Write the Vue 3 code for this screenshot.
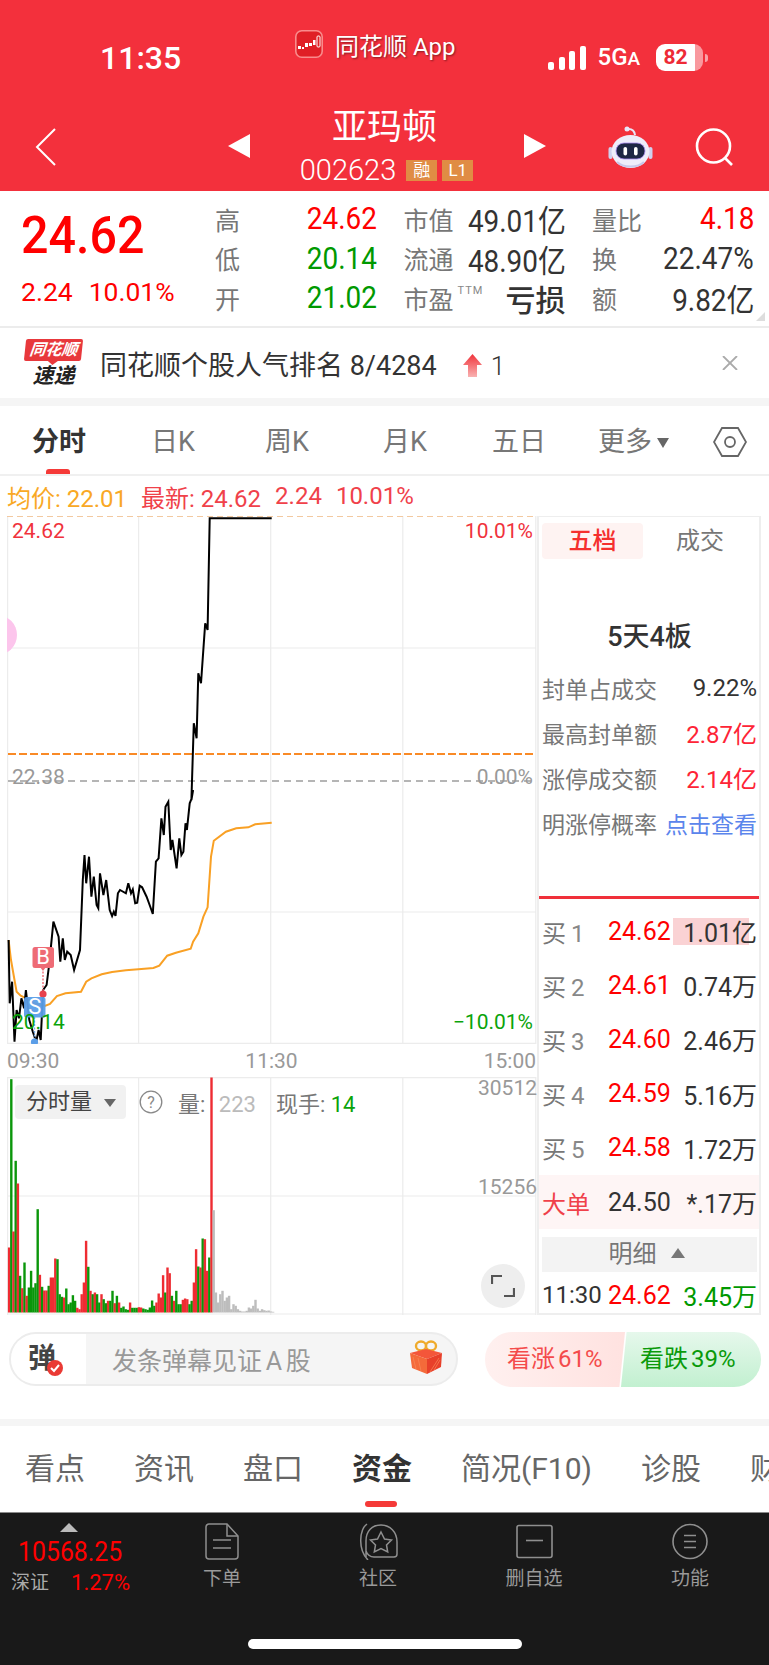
<script setup>
const stats = [
  { label: '高', value: '24.62', cls: 'up' },
  { label: '市值', value: '49.01亿' },
  { label: '量比', value: '4.18', cls: 'up' },
  { label: '低', value: '20.14', cls: 'down' },
  { label: '流通', value: '48.90亿' },
  { label: '换', value: '22.47%' },
  { label: '开', value: '21.02', cls: 'down' },
  { label: '市盈', value: '亏损', ttm: true, cls: 'loss' },
  { label: '额', value: '9.82亿' },
]
const chartTabs = ['分时', '日K', '周K', '月K', '五日']
const infoRows = [
  { label: '封单占成交', value: '9.22%', cls: 'dark' },
  { label: '最高封单额', value: '2.87亿', cls: 'red' },
  { label: '涨停成交额', value: '2.14亿', cls: 'red' },
  { label: '明涨停概率', value: '点击查看', cls: 'blue' },
]
const buys = [
  { n: 1, price: '24.62', vol: '1.01亿', hl: true },
  { n: 2, price: '24.61', vol: '0.74万' },
  { n: 3, price: '24.60', vol: '2.46万' },
  { n: 4, price: '24.59', vol: '5.16万' },
  { n: 5, price: '24.58', vol: '1.72万' },
]
const pageTabs = ['看点', '资讯', '盘口', '资金', '简况(F10)', '诊股', '财务']

// coordinates read off the reference crops
const toPts = (raw, yBase) =>
  raw.map(([x, y]) => `${(x / 2.9).toFixed(1)},${(yBase + y / 3).toFixed(1)}`).join(' ')

const priceLower = [[25,450],[28,640],[35,575],[42,755],[48,660],[55,685],[62,625],[70,655],[75,600],[85,690],[95,725],[105,755],[112,720],[118,750],[125,600],[135,585],[143,520],[155,395],[170,440],[175,515],[182,445],[188,510],[195,485],[205,495],[215,540],[232,480],[240,270],[245,195],[250,280],[258,200],[265,320],[272,260],[280,345],[285,355],[290,250],[300,315],[308,270],[318,360],[325,378],[330,365],[335,378],[342,310],[348,300],[365,310],[372,280],[380,310],[385,298],[392,340],[398,338],[405,287],[412,292],[425,320],[435,348],[443,372],[452,215],[460,205],[468,85],[475,135],[480,50],[488,35],[495,180],[500,150],[512,235],[520,145],[526,195],[532,185],[538,100],[542,120],[550,40],[556,25],[560,0]]
const priceUpper = [[555,870],[562,640],[570,685],[575,490],[583,520],[595,340],[602,360],[608,25],[788,25]]
const pricePts = toPts(priceLower, 790) + ' ' + toPts(priceUpper, 510)
const avgPts = toPts([[25,450],[32,510],[42,570],[48,605],[60,617],[70,622],[100,640],[130,648],[145,642],[165,618],[190,610],[235,605],[250,575],[265,565],[295,553],[325,546],[365,541],[410,537],[445,534],[462,527],[485,497],[510,488],[553,476],[560,455],[575,430],[590,380],[602,352],[612,200],[620,152],[655,125],[685,115],[720,112],[740,103],[788,98]], 790)

const volRaw = 'r195 g700 r243 g455 r387 g110 r73 g150 r50 g75 g125 g75 g88 g310 r113 g77 r66 r66 g80 r105 r105 r162 g160 g55 g47 r45 g72 g25 g30 g52 g35 r14 r10 r55 r90 r215 g137 r65 g55 r60 g55 g30 r55 g40 g28 r35 g35 g65 r28 g50 r30 g14 g18 g10 g8 r30 g14 g14 g14 r16 r15 g12 g10 g8 g15 g36 g20 r30 r57 r45 r112 g60 r135 r118 g50 r35 g65 g25 g25 r38 r42 r40 g25 g35 r90 r190 g138 r135 g222 r220 r125 g165 r705 h307 h60 h30 h55 h65 h35 h45 h50 h10 h25 h20 h10 h5 h3 h3 h5 h15 h12 h20 h38 h12 h5 h10 h7 h5 h6 h3 h2'
const volColors = { r: '#ee2c32', g: '#0a960a', h: '#bdbdbd' }
const volBars = volRaw.split(' ').map((s, i) => {
  const h = Number(s.slice(1)) / 3
  return { x: (7.9 + 2.2 * i).toFixed(1), y: (1312.5 - h).toFixed(1), h: h.toFixed(1), fill: volColors[s[0]] }
})
</script>

<template>
  <div class="page">
    <header class="head">
      <div class="status">
        <div class="time">11:35</div>
        <div class="app-label">
          <svg width="28" height="28" viewBox="0 0 28 28">
            <rect x="0.8" y="0.8" width="26.4" height="26.4" rx="6" fill="#e01f26" stroke="#f98c8c" stroke-width="1.6" />
            <g fill="#fff">
              <rect x="3" y="16" width="3" height="3" /><rect x="7" y="17" width="2" height="2" />
              <rect x="10" y="13" width="3" height="4" /><rect x="14" y="13" width="3" height="3" />
              <rect x="18" y="10" width="2.5" height="5" />
            </g>
            <rect x="22" y="6" width="3" height="11" rx="1" fill="none" stroke="#fff" />
          </svg>
          <span>同花顺 App</span>
        </div>
        <div class="sys">
          <div class="signal"><i class="s1"></i><i class="s2"></i><i class="s3"></i><i class="s4"></i></div>
          <div class="net">5G<small>A</small></div>
          <div class="battery"><b>82</b></div>
          <i class="batt-tip"></i>
        </div>
      </div>
      <div class="nav">
        <svg class="back" width="21" height="38" viewBox="0 0 21 38"><path d="M20 1 2 19l18 18" fill="none" stroke="#fff" stroke-width="2" /></svg>
        <span class="tri-l"></span>
        <div class="title">
          <div class="name">亚玛顿</div>
          <div class="code">002623<span class="tag">融</span><span class="tag">L1</span></div>
        </div>
        <span class="tri-r"></span>
        <svg class="robot" width="47" height="43" viewBox="0 0 47 43">
          <path d="M28 10c-.5-4-3-6-6.500-6" fill="none" stroke="#e8e6f8" stroke-width="2" />
          <circle cx="20" cy="4" r="2.500" fill="#e8e6f8" />
          <rect x="1.500" y="22" width="4" height="12" rx="2" fill="#cfd0ee" />
          <rect x="41.500" y="22" width="4" height="12" rx="2" fill="#cfd0ee" />
          <ellipse cx="23.500" cy="26.500" rx="19" ry="16.500" fill="#eeedfa" />
          <path d="M10 37c6 6 21 6 27 0" fill="none" stroke="#c7c8ea" stroke-width="2" />
          <rect x="9" y="18" width="29" height="16" rx="8" fill="#1d2644" stroke="#a98cf0" stroke-width=".8" />
          <rect x="16.500" y="22" width="3.600" height="8.500" rx="1.800" fill="#fff" />
          <rect x="27" y="22" width="3.600" height="8.500" rx="1.800" fill="#fff" />
        </svg>
        <svg class="search" width="39" height="38" viewBox="0 0 39 38">
          <circle cx="18.500" cy="18" r="16.500" fill="none" stroke="#fff" stroke-width="2.600" />
          <path d="M30 30l7 7" stroke="#fff" stroke-width="2.600" />
        </svg>
      </div>
    </header>

    <section class="quote">
      <div class="now">
        <div class="big">24.62</div>
        <div class="change"><span>2.24</span><span>10.01%</span></div>
      </div>
      <div class="stats">
        <div v-for="s in stats" :key="s.label" class="stat">
          <span class="lbl">{{ s.label }}</span>
          <sup v-if="s.ttm">TTM</sup>
          <span class="val" :class="s.cls">{{ s.value }}</span>
        </div>
      </div>
      <i class="corner"></i>
    </section>

    <section class="rank">
      <div class="rank-logo">
        <div class="logo-top">同花顺</div>
        <div class="logo-bot">速递</div>
      </div>
      <div class="rank-text">同花顺个股人气排名 8/4284</div>
      <svg class="rank-arrow" width="19" height="23" viewBox="0 0 19 23">
        <defs>
          <linearGradient id="ar" x1="0" y1="0" x2="0" y2="1">
            <stop offset="0" stop-color="#f0333a" /><stop offset="1" stop-color="#f9b2b2" />
          </linearGradient>
        </defs>
        <path d="M9.500 0 19 11h-5v12H5V11H0z" fill="url(#ar)" />
      </svg>
      <span class="rank-num">1</span>
      <svg class="rank-close" width="16" height="14" viewBox="0 0 16 14"><path d="M1 0l14 14M15 0 1 14" stroke="#aaa" stroke-width="1.800" /></svg>
    </section>

    <nav class="chart-tabs">
      <div v-for="(t, i) in chartTabs" :key="t" class="ctab" :class="{ on: i === 0 }">{{ t }}</div>
      <div class="ctab">更多<i class="more-tri"></i></div>
      <svg width="34" height="30" viewBox="0 0 34 30">
        <path d="M9 1h16l8 14-8 14H9L1 15z" fill="none" stroke="#666" stroke-width="1.800" />
        <circle cx="17" cy="15" r="5" fill="none" stroke="#666" stroke-width="1.800" />
      </svg>
    </nav>

    <div class="avg-line">
      <span class="a-o">均价: 22.01</span>
      <span class="a-r">最新: 24.62</span>
      <span class="a-r">2.24</span>
      <span class="a-r">10.01%</span>
    </div>

    <section class="board">
      <div class="charts">
        <div class="price-chart">
          <svg width="530" height="528" viewBox="7 516 530 528">
            <g stroke="#ececec" stroke-width="1.200">
              <path d="M7.600 516V1044M138.600 516V1044M270.700 516V1044M402.800 516V1044M535.800 516V1044" />
              <path d="M7 648H536M7 912H536M7 1043.400H536" />
            </g>
            <path d="M7 516.500H536" stroke="#f3c9a0" stroke-dasharray="6 4" />
            <path d="M8 781H535" stroke="#9d9d9d" stroke-width="1.400" stroke-dasharray="7 5" />
            <path d="M8 754H535" stroke="#f98a26" stroke-width="1.800" stroke-dasharray="8 3" />
            <circle cx="-3" cy="635" r="20" fill="#fcc5ec" />
            <polyline :points="avgPts" fill="none" stroke="#f9a024" stroke-width="2" />
            <polyline :points="pricePts" fill="none" stroke="#000" stroke-width="2" />
            <path d="M43 968v24" stroke="#ee6b75" stroke-width="1.400" stroke-dasharray="2 1.500" />
            <circle cx="43" cy="994" r="3.600" fill="#e8414d" />
            <rect x="32.500" y="947" width="21.500" height="21" rx="2.500" fill="#ee6b75" />
            <path d="M40 967h6l-3 4z" fill="#ee6b75" />
            <text x="43.200" y="964" class="mark">B</text>
            <path d="M34.500 1017v22" stroke="#79aeea" stroke-width="1.400" stroke-dasharray="2 1.500" />
            <circle cx="34.500" cy="1042" r="3.600" fill="#5b9ee8" />
            <rect x="24" y="997" width="21.500" height="20.500" rx="2.500" fill="#5b9ee8" opacity=".95" />
            <text x="34.700" y="1014" class="mark">S</text>
          </svg>
          <span class="pl pl-tl r">24.62</span>
          <span class="pl pl-tr r">10.01%</span>
          <span class="pl pl-ml g9">22.38</span>
          <span class="pl pl-mr g9">0.00%</span>
          <span class="pl pl-bl gr">20.14</span>
          <span class="pl pl-br gr">−10.01%</span>
        </div>
        <div class="times"><span>09:30</span><span>11:30</span><span>15:00</span></div>
        <div class="vol-chart">
          <svg width="530" height="238" viewBox="7 1077 530 238">
            <g stroke="#ececec" stroke-width="1.200">
              <path d="M7.600 1077V1315M138.600 1077V1315M270.700 1077V1315M402.800 1077V1315M535.800 1077V1315" />
              <path d="M7 1077.600H536M7 1196H536M7 1314H536" />
            </g>
            <rect v-for="(b, i) in volBars" :key="i" :x="b.x" :y="b.y" width="2.400" :height="b.h" :fill="b.fill" />
          </svg>
          <div class="vol-top">
            <div class="vol-sel">分时量<i></i></div>
            <svg class="help" width="24" height="24" viewBox="0 0 24 24">
              <circle cx="12" cy="12" r="10.800" fill="none" stroke="#888" stroke-width="1.300" />
              <text x="12" y="17.500" class="help-q">?</text>
            </svg>
            <span class="vol-lbl">量: <em>223</em></span>
            <span class="vol-lbl now-hand">现手: <b>14</b></span>
          </div>
          <span class="vl vl-a">30512</span>
          <span class="vl vl-b">15256</span>
          <div class="expand">
            <svg width="24" height="24" viewBox="0 0 24 24"><path d="M1 10V2h10M23 14v8H13" fill="none" stroke="#555" stroke-width="2.200" /></svg>
          </div>
        </div>
      </div>

      <aside class="side">
        <div class="side-tabs"><div class="st on">五档</div><div class="st">成交</div></div>
        <div class="limit">5天4板</div>
        <div v-for="r in infoRows" :key="r.label" class="info">
          <span>{{ r.label }}</span><span :class="r.cls">{{ r.value }}</span>
        </div>
        <div class="redline"></div>
        <div v-for="b in buys" :key="b.n" class="buy">
          <span class="buy-l">买<i>{{ b.n }}</i></span>
          <span class="red">{{ b.price }}</span>
          <span class="vol" :class="{ hl: b.hl }">{{ b.vol }}</span>
        </div>
        <div class="buy bigorder">
          <span class="big-l">大单</span><span>24.50</span><span class="vol">*.17万</span>
        </div>
        <div class="detail">明细<i></i></div>
        <div class="buy last">
          <span class="last-time">11:30</span><span class="red">24.62</span><span class="vol green">3.45万</span>
        </div>
      </aside>
    </section>

    <section class="actions">
      <div class="barrage">
        <div class="dan">弹<svg class="dan-ok" width="16" height="16" viewBox="0 0 16 16"><circle cx="8" cy="8" r="8" fill="#ea3a34" /><path d="M4 8l3 3 5-6" fill="none" stroke="#fff" stroke-width="2" /></svg></div>
        <div class="dan-input">发条弹幕见证 A 股</div>
        <svg class="gift" width="33" height="35" viewBox="0 0 33 35">
          <ellipse cx="11" cy="6" rx="5" ry="4.500" fill="none" stroke="#efab2c" stroke-width="2.400" />
          <ellipse cx="21" cy="6" rx="5" ry="4.500" fill="none" stroke="#efab2c" stroke-width="2.400" />
          <path d="M0 13l16-4 16 4-15 6z" fill="#f4563a" />
          <path d="M0 13l17 6v15L2 28z" fill="#f46a3a" />
          <path d="M17 19l15-6-1 14-14 7z" fill="#e8402a" />
          <path d="M20 32l9-14M24 30l6-10M6 29 3 17M11 31 8 18" stroke="#f98a5a" stroke-width="1" opacity=".7" />
        </svg>
      </div>
      <div class="votes">
        <div class="vote rise">看涨 61%</div>
        <div class="vote fall">看跌 39%</div>
      </div>
    </section>

    <nav class="page-tabs">
      <div v-for="(t, i) in pageTabs" :key="t" class="ptab" :class="{ on: i === 3 }">{{ t }}</div>
    </nav>

    <footer class="foot">
      <div class="foot-row">
        <div class="index">
          <i class="idx-tri"></i>
          <div class="idx-num">10568.25</div>
          <div class="idx-sub"><span>深证</span><b>1.27%</b></div>
        </div>
        <div class="fitem">
          <svg width="34" height="37" viewBox="0 0 34 37" fill="none" stroke="#8f8f8f" stroke-width="1.500">
            <path d="M4 1h18l11 12v20a3 3 0 0 1-3 3H4a3 3 0 0 1-3-3V4a3 3 0 0 1 3-3z" />
            <path d="M22 1v12h11M8 17h18M8 25h18" />
          </svg>
          <span>下单</span>
        </div>
        <div class="fitem">
          <svg width="40" height="37" viewBox="0 0 40 37" fill="none" stroke="#8f8f8f" stroke-width="1.500">
            <path d="M9 1C2 6-1 26 10 37" />
            <path d="M8 34V18C8 8 14 2 23 2s16 7 16 17v12a3 3 0 0 1-3 3H16C12 34 9 31 8 28" />
            <path d="M23 9l3.500 7 7 1-5 5 1.200 7-6.700-3.500-6.700 3.500 1.200-7-5-5 7-1z" />
          </svg>
          <span>社区</span>
        </div>
        <div class="fitem">
          <svg width="37" height="34" viewBox="0 0 37 34" fill="none" stroke="#8f8f8f" stroke-width="1.600">
            <rect x="1" y="1" width="35" height="32" rx="2" />
            <path d="M10 16h17" />
          </svg>
          <span>删自选</span>
        </div>
        <div class="fitem">
          <svg width="36" height="37" viewBox="0 0 36 37" fill="none" stroke="#8f8f8f" stroke-width="1.600">
            <circle cx="18" cy="18.500" r="17" />
            <path d="M12 12.500h12M12 18.500h12M12 24.500h12" />
          </svg>
          <span>功能</span>
        </div>
      </div>
      <div class="home-bar"></div>
    </footer>
  </div>
</template>

<style scoped>
.page {
  width: 769px;
  height: 1665px;
  overflow: hidden;
  background: #fff;
  display: flex;
  flex-direction: column;
  font-family: Roboto, "Noto Sans CJK SC", sans-serif;
  color: #333;
}

/* header */
.head {
  height: 191px;
  background: #f3303c;
  color: #fff;
  flex-shrink: 0;
}
.status {
  height: 100px;
  display: grid;
  grid-template-columns: 195px 253px auto;
  padding-left: 100px;
}
.time {
  margin-top: 38px;
  font-size: 32px;
  line-height: 40px;
  font-weight: 500;
}
.app-label {
  margin-top: 30px;
  height: 28px;
  display: flex;
  align-items: center;
  gap: 12px;
  font-size: 24px;
  text-shadow: 1px 1px 2px rgba(0, 0, 0, .45);
}
.sys {
  margin-top: 44px;
  height: 27px;
  display: flex;
  align-items: center;
}
.signal {
  display: flex;
  align-items: flex-end;
  gap: 4.500px;
  height: 24px;
  margin-top: 1px;
}
.signal i {
  width: 6px;
  border-radius: 2px;
  background: #fff;
}
.s1 { height: 8px; }
.s2 { height: 13px; }
.s3 { height: 19px; }
.s4 { height: 24px; }
.net {
  margin-left: 12px;
  width: 58px;
  font-size: 24px;
  font-weight: 500;
  line-height: 27px;
}
.net small {
  font-size: 19px;
}
.battery {
  width: 47px;
  height: 27px;
  border-radius: 9px;
  background: linear-gradient(90deg, #fff 83%, rgba(255, 255, 255, .5) 83%);
  color: #ee2a36;
  text-align: center;
  font-size: 21px;
  line-height: 27px;
  padding-right: 7px;
  box-sizing: border-box;
}
.batt-tip {
  width: 3px;
  height: 8px;
  margin-left: 2px;
  border-radius: 0 3px 3px 0;
  background: rgba(255, 255, 255, .55);
}
.nav {
  height: 91px;
  display: flex;
  padding-left: 35px;
}
.back {
  margin-top: 28px;
}
.tri-l, .tri-r {
  width: 0;
  height: 0;
  margin-top: 34px;
  border-top: 12.500px solid transparent;
  border-bottom: 12.500px solid transparent;
}
.tri-l {
  margin-left: 172px;
  border-right: 22px solid #fff;
}
.tri-r {
  border-left: 22px solid #fff;
}
.title {
  width: 274px;
  text-align: center;
}
.name {
  margin-top: 8px;
  padding-right: 5px;
  font-size: 35px;
  line-height: 40px;
}
.code {
  margin-top: 11px;
  display: flex;
  justify-content: center;
  align-items: center;
  font-size: 29px;
  font-weight: 300;
  line-height: 22px;
  padding-right: 1px;
}
.tag {
  width: 31px;
  height: 21px;
  margin-left: 5px;
  background: #e08c44;
  font-size: 17px;
  line-height: 21px;
  font-weight: 400;
}
.code .tag:first-of-type {
  margin-left: 10px;
}
.robot {
  margin: 25px 0 0 61px;
}
.search {
  margin: 28px 0 0 41px;
}

/* quote */
.quote {
  position: relative;
  height: 135px;
  flex-shrink: 0;
  display: flex;
  border-bottom: 2px solid #ececec;
}
.now {
  width: 215px;
  padding-left: 21px;
  box-sizing: border-box;
}
.big {
  margin-top: 20px;
  font-size: 52px;
  line-height: 50px;
  font-weight: 500;
  color: #f00;
  transform: scaleX(.93);
  transform-origin: left;
}
.change {
  margin-top: 15.500px;
  display: flex;
  gap: 16px;
  font-size: 26.500px;
  line-height: 30px;
  color: #f00;
}
.stats {
  margin-top: 8px;
  display: grid;
  grid-template-columns: 162px 162px 162px;
  grid-auto-rows: 39.500px;
  column-gap: 26.500px;
  align-items: center;
}
.stat {
  display: flex;
  align-items: center;
  justify-content: space-between;
}
.lbl {
  font-size: 25px;
  color: #777;
}
.val {
  font-size: 31px;
  color: #333;
  white-space: nowrap;
  transform: scaleX(.9);
  transform-origin: right;
}
.val.up { color: #f00; }
.val.down { color: #090; }
.val.loss {
  font-size: 30px;
  font-weight: 500;
  transform: none;
}
sup {
  margin: -14px auto 0 4px;
  font-size: 11px;
  line-height: 11px;
  color: #888;
  letter-spacing: 1px;
}
.corner {
  position: absolute;
  right: 4px;
  bottom: 5px;
  width: 9px;
  height: 9px;
  background: #ddd;
  clip-path: polygon(100% 0, 100% 100%, 0 100%);
}

/* rank banner */
.rank {
  height: 70px;
  flex-shrink: 0;
  display: flex;
  align-items: center;
  padding-left: 25px;
}
.rank-logo {
  width: 57px;
  text-align: center;
}
.logo-top {
  position: relative;
  background: #e8383c;
  color: #fff;
  font-size: 16px;
  line-height: 22px;
  font-weight: 700;
  font-style: italic;
  transform: skewX(-6deg);
  border-radius: 2px;
}
.logo-top::after {
  content: "";
  position: absolute;
  left: 24px;
  bottom: -4px;
  border-top: 4px solid #e8383c;
  border-left: 5px solid transparent;
  border-right: 5px solid transparent;
}
.logo-bot {
  margin-top: 4px;
  font-size: 21px;
  line-height: 23px;
  font-weight: 700;
  font-style: italic;
  color: #222;
}
.rank-text {
  margin-left: 18px;
  font-size: 27px;
  color: #333;
  white-space: nowrap;
}
.rank-arrow {
  margin: 4px 0 0 26px;
}
.rank-num {
  margin: 6px 0 0 9px;
  font-size: 26px;
  font-weight: 300;
  color: #333;
}
.rank-close {
  margin-left: auto;
  margin-right: 31px;
}

/* chart tabs */
.chart-tabs {
  border-top: 8px solid #f5f5f5;
  height: 64px;
  padding: 4px 0 0 32px;
  flex-shrink: 0;
  display: grid;
  grid-template-columns: 119px 114px 118px 109px 106px 115px 34px;
  align-items: center;
  border-bottom: 2px solid #f0f0f0;
}
.ctab {
  position: relative;
  font-size: 27px;
  color: #777;
  white-space: nowrap;
  line-height: 64px;
}
.ctab.on {
  color: #333;
  font-weight: 700;
}
.ctab.on::after {
  content: "";
  position: absolute;
  left: 14px;
  bottom: 0;
  width: 24px;
  height: 5px;
  border-radius: 3px 3px 0 0;
  background: #f53a38;
}
.more-tri {
  display: inline-block;
  margin-left: 5px;
  vertical-align: 3px;
  border-top: 10px solid #666;
  border-left: 6px solid transparent;
  border-right: 6px solid transparent;
}

.avg-line {
  height: 40px;
  flex-shrink: 0;
  display: flex;
  padding-left: 7px;
  align-items: center;
  font-size: 24px;
  color: #f5323c;
  white-space: nowrap;
}
.avg-line span {
  margin-right: 14px;
}
.a-o { color: #f9a825; }
.a-r { color: #f0414a; }

/* board */
.board {
  height: 799px;
  flex-shrink: 0;
  display: flex;
  padding-left: 7px;
}
.charts {
  width: 530px;
}
.price-chart {
  position: relative;
  height: 528px;
}
.price-chart svg, .vol-chart svg {
  display: block;
}
.mark {
  font-family: Roboto, sans-serif;
  font-size: 22px;
  fill: #fff;
  text-anchor: middle;
}
.pl {
  position: absolute;
  font-size: 21px;
  line-height: 24px;
}
.r { color: #f0323c; }
.g9 { color: #999; }
.gr { color: #0aa30a; }
.pl-tl { left: 5px; top: 3px; }
.pl-tr { right: 4px; top: 3px; }
.pl-ml { left: 5px; top: 249px; }
.pl-mr { right: 4px; top: 249px; }
.pl-bl { left: 5px; top: 494px; }
.pl-br { right: 4px; top: 494px; }
.times {
  height: 33px;
  display: flex;
  justify-content: space-between;
  align-items: center;
  font-size: 21px;
  color: #999;
  padding-right: 1px;
}
.vol-chart {
  position: relative;
  height: 238px;
}
.vol-top {
  position: absolute;
  left: 8px;
  top: 8px;
  display: flex;
  align-items: center;
}
.vol-sel {
  width: 111px;
  height: 34px;
  border-radius: 4px;
  background: rgba(240, 240, 240, .95);
  font-size: 22px;
  line-height: 34px;
  padding-left: 11px;
  box-sizing: border-box;
  color: #444;
}
.vol-sel i {
  display: inline-block;
  margin-left: 12px;
  vertical-align: 2px;
  border-top: 8px solid #666;
  border-left: 6px solid transparent;
  border-right: 6px solid transparent;
}
.help {
  margin-left: 13px;
}
.help-q {
  font-family: Roboto, sans-serif;
  font-size: 16px;
  fill: #888;
  text-anchor: middle;
}
.vol-lbl {
  margin-left: 15px;
  font-size: 22px;
  color: #777;
  white-space: nowrap;
}
.vol-lbl em {
  font-style: normal;
  color: #bbb;
  margin-left: 8px;
}
.vol-lbl b {
  font-weight: 400;
  color: #0aa30a;
}
.now-hand {
  margin-left: 20px;
}
.vl {
  position: absolute;
  right: 0;
  font-size: 21px;
  line-height: 24px;
  color: #999;
}
.vl-a { top: -1px; }
.vl-b { top: 98px; }
.expand {
  position: absolute;
  left: 474px;
  top: 187px;
  width: 44px;
  height: 44px;
  border-radius: 50%;
  background: #eee;
  display: flex;
  align-items: center;
  justify-content: center;
}

/* order panel */
.side {
  width: 224px;
  box-sizing: border-box;
  border-top: 1px solid #eee;
  border-left: 2px solid #eee;
  border-right: 2px solid #eee;
  border-bottom: 2px solid #eee;
  padding: 6px 2px 0 3px;
}
.side-tabs {
  display: flex;
  height: 36px;
}
.st {
  width: 101px;
  border-radius: 4px;
  text-align: center;
  font-size: 24px;
  line-height: 36px;
  color: #777;
}
.st + .st {
  width: 114px;
}
.st.on {
  background: #fef3f2;
  color: #f5302e;
  font-weight: 500;
}
.limit {
  margin-top: 60px;
  height: 36px;
  text-align: center;
  font-size: 27px;
  line-height: 36px;
  font-weight: 500;
  color: #333;
}
.info {
  height: 45px;
  display: flex;
  justify-content: space-between;
  align-items: center;
  font-size: 23px;
  color: #777;
  white-space: nowrap;
}
.limit + .info {
  margin-top: 10px;
}
.info span + span {
  font-size: 24px;
}
.dark { color: #333; }
.info .red { color: #fe2436; }
.info .blue {
  font-size: 23px;
  color: #5b85ec;
}
.redline {
  height: 3px;
  margin: 51px -2px 0 -3px;
  background: #f0303a;
}
.buy {
  height: 54.200px;
  display: grid;
  grid-template-columns: 66px 62px 1fr;
  align-items: center;
  font-size: 25px;
  color: #333;
  white-space: nowrap;
}
.redline + .buy {
  margin-top: 5px;
}
.buy-l {
  font-size: 24px;
  color: #777;
}
.buy-l i {
  font-style: normal;
  margin-left: 5px;
  color: #888;
}
.buy .red { color: #f00; }
.vol {
  text-align: right;
  font-size: 25px;
  color: #333;
}
.vol.hl {
  background: linear-gradient(#fad2d4, #fad2d4) no-repeat 3px center / 76px 27px;
}
.green.vol { color: #090; }
.bigorder {
  margin: 0 -2px 0 -3px;
  padding: 0 2px 0 3px;
  background: #fef5f5;
}
.big-l {
  color: #f0414a;
  font-size: 24px;
}
.detail {
  margin-top: 8px;
  height: 35px;
  background: #f3f3f3;
  text-align: center;
  font-size: 24px;
  line-height: 35px;
  color: #777;
  padding-right: 6px;
}
.detail i {
  display: inline-block;
  margin-left: 14px;
  vertical-align: 4px;
  border-bottom: 10px solid #777;
  border-left: 7px solid transparent;
  border-right: 7px solid transparent;
}
.buy.last {
  margin-top: 4px;
  height: 38px;
}
.last-time {
  font-size: 24px;
}

/* bottom actions */
.actions {
  margin-top: 17px;
  height: 55px;
  flex-shrink: 0;
  display: flex;
  padding-left: 9px;
}
.barrage {
  width: 449px;
  height: 54px;
  box-sizing: border-box;
  border: 2px solid #ececec;
  border-radius: 27px;
  background: #f5f5f5;
  display: flex;
  align-items: center;
  overflow: hidden;
}
.dan {
  position: relative;
  width: 75px;
  height: 100%;
  padding-left: 17px;
  box-sizing: border-box;
  background: #fff;
  font-size: 28px;
  line-height: 50px;
  font-weight: 700;
  color: #444;
}
.dan-ok {
  position: absolute;
  left: 36px;
  top: 26px;
}
.dan-input {
  width: 324px;
  flex-shrink: 0;
  padding-left: 26px;
  box-sizing: border-box;
  font-size: 25px;
  word-spacing: -2.500px;
  color: #999;
  white-space: nowrap;
}
.gift {
  margin-top: -4px;
  flex-shrink: 0;
}
.votes {
  margin-left: 27px;
  display: flex;
}
.vote {
  width: 140px;
  height: 55px;
  font-size: 24px;
  line-height: 55px;
  word-spacing: -3px;
  white-space: nowrap;
}
.rise {
  padding-left: 22px;
  box-sizing: border-box;
  color: #f44b4b;
  background: linear-gradient(90deg, #fff0ef, #ffe2e0);
  border-radius: 27px 0 0 27px;
  clip-path: polygon(0 0, 100% 0, 96% 100%, 0 100%);
}
.fall {
  margin-left: -4px;
  padding-left: 19px;
  box-sizing: border-box;
  color: #0a9a0a;
  background: linear-gradient(#e6f8ec, #c2f0d0);
  border-radius: 0 27px 27px 0;
  clip-path: polygon(4% 0, 100% 0, 100% 100%, 0 100%);
}

/* page tabs */
.page-tabs {
  margin-top: 32px;
  border-top: 7px solid #f5f5f5;
  height: 86px;
  flex-shrink: 0;
  display: flex;
  padding-left: 25px;
  gap: 49px;
  overflow: hidden;
}
.ptab {
  position: relative;
  flex-shrink: 0;
  font-size: 30px;
  line-height: 86px;
  color: #666;
  white-space: nowrap;
}
.ptab.on {
  color: #333;
  font-weight: 700;
}
.ptab.on::after {
  content: "";
  position: absolute;
  left: 13px;
  bottom: 5px;
  width: 32px;
  height: 6px;
  border-radius: 3px;
  background: #f53a38;
}

/* footer */
.foot {
  flex: 1;
  background: #191919;
  border-top: 1px solid #8a8a8a;
}
.foot-row {
  height: 126px;
  display: grid;
  grid-template-columns: 144px repeat(4, 156px);
}
.index {
  padding: 10px 0 0 11px;
}
.idx-tri {
  display: block;
  width: 0;
  margin-left: 49px;
  border-bottom: 9px solid #bbb;
  border-left: 9px solid transparent;
  border-right: 9px solid transparent;
}
.idx-num {
  margin: 5px 0 0 7px;
  font-size: 27px;
  line-height: 30px;
  color: #f00;
  transform: scaleX(.92);
  transform-origin: left;
}
.idx-sub {
  margin-top: 1px;
  display: flex;
  align-items: center;
  gap: 22px;
  line-height: 30px;
}
.idx-sub span {
  font-size: 19px;
  color: #aaa;
}
.idx-sub b {
  font-weight: 400;
  font-size: 22px;
  color: #f00;
}
.fitem {
  padding-top: 10px;
  display: flex;
  flex-direction: column;
  align-items: center;
  color: #9a9a9a;
}
.fitem svg {
  height: 37px;
}
.fitem span {
  margin-top: 6px;
  font-size: 19px;
  line-height: 26px;
}
.home-bar {
  width: 274px;
  height: 10px;
  margin: 0 auto;
  border-radius: 5px;
  background: #fff;
}
</style>

<style>
html, body {
  margin: 0;
  background: #fff;
}
</style>
